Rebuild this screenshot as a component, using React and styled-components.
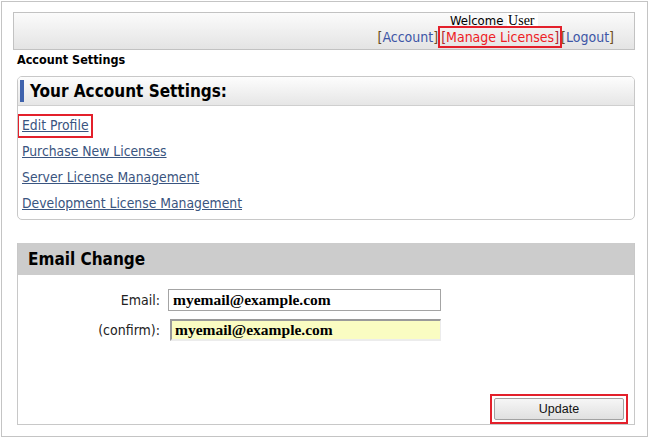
import React from 'react';
import styled, { createGlobalStyle } from 'styled-components';

const GlobalStyle = createGlobalStyle`
  html, body {
    margin: 0;
    padding: 0;
    background: #ffffff;
  }
  body {
    font-family: "DejaVu Sans Condensed", "DejaVu Sans", sans-serif;
    font-size: 13px;
    color: #111;
  }
`;

const RED = '#e3202b';

const App = () => {
  return (
    <>
      <GlobalStyle />
      <Frame>
        <TopBar>
          <UserBox>
            <Welcome>
              Welcome <UserName>User</UserName>
            </Welcome>
            <NavLinks>
              <NavItem>
                [<NavLink href="#">Account</NavLink>]
              </NavItem>
              <NavItem $active $highlight>
                [<NavLink href="#" $active>Manage Licenses</NavLink>]
              </NavItem>
              <NavItem>
                [<NavLink href="#">Logout</NavLink>]
              </NavItem>
            </NavLinks>
          </UserBox>
        </TopBar>

        <Content>
          <Breadcrumb>Account Settings</Breadcrumb>

          <SettingsPanel>
            <SettingsHeader>
              <Marker />
              <PanelTitle>Your Account Settings:</PanelTitle>
            </SettingsHeader>
            <LinkList>
              <LinkRow>
                <Highlight>
                  <SettingsLink href="#">Edit Profile</SettingsLink>
                </Highlight>
              </LinkRow>
              <LinkRow>
                <SettingsLink href="#">Purchase New Licenses</SettingsLink>
              </LinkRow>
              <LinkRow>
                <SettingsLink href="#">Server License Management</SettingsLink>
              </LinkRow>
              <LinkRow>
                <SettingsLink href="#">Development License Management</SettingsLink>
              </LinkRow>
            </LinkList>
          </SettingsPanel>

          <EmailPanel>
            <EmailHeader>
              <PanelTitle>Email Change</PanelTitle>
            </EmailHeader>
            <EmailBody>
              <FormGrid>
                <FieldLabel>Email:</FieldLabel>
                <TextInput defaultValue="myemail@example.com" />
                <FieldLabel>(confirm):</FieldLabel>
                <TextInput defaultValue="myemail@example.com" $confirm />
              </FormGrid>
              <Actions>
                <ButtonHighlight>
                  <UpdateButton type="button">Update</UpdateButton>
                </ButtonHighlight>
              </Actions>
            </EmailBody>
          </EmailPanel>
        </Content>
      </Frame>
    </>
  );
};

const Frame = styled.div`
  box-sizing: border-box;
  margin: 1px;
  width: 647px;
  height: 436px;
  border: 1px solid #c4c4c4;
  padding: 10px 12px 0 11px;
`;

const TopBar = styled.div`
  box-sizing: border-box;
  height: 38px;
  border: 1px solid #c2c2c2;
  background: linear-gradient(#fbfbfb, #e4e4e4);
  display: flex;
  justify-content: flex-end;
  padding-right: 20px;
`;

const UserBox = styled.div`
  display: flex;
  flex-direction: column;
  align-items: center;
`;

const Welcome = styled.div`
  font-size: 13px;
  line-height: 15px;
  color: #000;
  padding-right: 4px;
`;

const UserName = styled.span`
  font-family: "Liberation Serif", serif;
  font-size: 14px;
  background: #fff;
  padding: 0 3px 0 1px;
`;

const NavLinks = styled.div`
  display: flex;
  line-height: 16px;
  font-size: 14px;
  margin-top: 1px;
`;

const NavItem = styled.span`
  color: ${({ $active }) => ($active ? '#b0262c' : '#6b4b1c')};
  outline: ${({ $highlight }) => ($highlight ? `2px solid ${RED}` : 'none')};
  outline-offset: 1px;
  margin: ${({ $highlight }) => ($highlight ? '0 2px 0 3px' : '0')};
`;

const NavLink = styled.a`
  color: ${({ $active }) => ($active ? '#ee1c25' : '#3d56a6')};
  text-decoration: none;
`;

const Content = styled.div`
  padding-left: 4px;
`;

const Breadcrumb = styled.div`
  font-weight: bold;
  font-size: 12.5px;
  line-height: 18px;
  margin: 1px 0 7px 0;
  color: #000;
`;

const SettingsPanel = styled.div`
  border: 1px solid #c8c8c8;
  border-radius: 5px;
  overflow: hidden;
`;

const SettingsHeader = styled.div`
  box-sizing: border-box;
  height: 29px;
  display: flex;
  align-items: center;
  background: linear-gradient(#fdfdfd, #e6e6e6);
  border-bottom: 1px solid #cfcfcf;
  padding-left: 2px;
`;

const Marker = styled.span`
  width: 4px;
  height: 22px;
  background: #3f63ad;
  margin-right: 6px;
`;

const PanelTitle = styled.h2`
  margin: 0;
  font-size: 17px;
  font-weight: bold;
  color: #000;
  line-height: 22px;
`;

const LinkList = styled.div`
  padding: 6px 0 3px 0;
`;

const LinkRow = styled.div`
  line-height: 26px;
  height: 26px;
  padding-left: 4px;
`;

const Highlight = styled.span`
  border: 2px solid ${RED};
  padding: 2px 2px 3px 3px;
  margin-left: -5px;
`;

const SettingsLink = styled.a`
  color: #3a5580;
  font-size: 13.8px;
  text-decoration: underline;
`;

const EmailPanel = styled.div`
  margin-top: 23px;
  border: 1px solid #c8c8c8;
  border-top: none;
`;

const EmailHeader = styled.div`
  box-sizing: border-box;
  height: 32px;
  background: #cccccc;
  display: flex;
  align-items: center;
  padding-left: 10px;
`;

const EmailBody = styled.div`
  box-sizing: border-box;
  height: 149px;
  display: flex;
  flex-direction: column;
  padding: 14px 6px 0 0;
`;

const FormGrid = styled.div`
  display: grid;
  grid-template-columns: 142px 273px;
  column-gap: 8px;
  row-gap: 8px;
  align-items: center;
`;

const FieldLabel = styled.label`
  text-align: right;
  font-size: 14px;
  color: #222;
`;

const TextInput = styled.input`
  box-sizing: border-box;
  height: 22px;
  width: ${({ $confirm }) => ($confirm ? '271px' : '273px')};
  margin-left: ${({ $confirm }) => ($confirm ? '2px' : '0')};
  font-family: "Liberation Serif", serif;
  font-weight: bold;
  font-size: 15.5px;
  color: #000;
  padding: 0 4px;
  background: ${({ $confirm }) => ($confirm ? '#fafcc2' : '#ffffff')};
  border: 1px solid #a4a4a4;
  ${({ $confirm }) =>
    $confirm &&
    `
    border-width: 2px 1px 2px 2px;
    border-color: #9a9a9a #ececec #ececec #9a9a9a;
    padding-left: 3px;
  `}
  outline: none;
`;

const Actions = styled.div`
  margin-top: auto;
  display: flex;
  justify-content: flex-end;
`;

const ButtonHighlight = styled.div`
  display: flex;
  border: 2px solid ${RED};
  padding: 2px;
`;

const UpdateButton = styled.button`
  box-sizing: border-box;
  width: 130px;
  height: 22px;
  margin: 0;
  font-family: "Liberation Sans", Arial, sans-serif;
  font-size: 12.5px;
  color: #111;
  background: linear-gradient(#f6f6f6, #e0e0e0);
  border: 1px solid #a2a2a2;
  border-radius: 2px;
  cursor: pointer;
`;

export default App;
